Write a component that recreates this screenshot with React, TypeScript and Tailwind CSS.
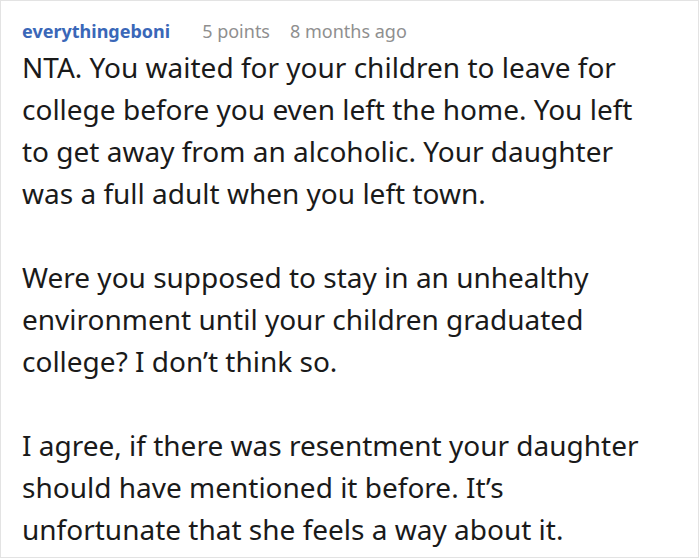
export default function App() {
  return (
    <div className="w-[699px] h-[558px] border border-[#e3e3e3] bg-white font-['Noto_Sans',sans-serif] overflow-hidden">
      <div className="pl-[21px] pt-[17px]">
        <div className="flex items-baseline text-[18px] leading-[26px]">
          <span className="font-bold text-[#3a67b8]">everythingeboni</span>
          <span className="ml-[32px] text-[#8f8f8f]">5 points</span>
          <span className="ml-[20px] text-[#8f8f8f]">8 months ago</span>
        </div>
        <div className="mt-[2px] text-[28px] leading-[42px] text-[#1a1a1a] whitespace-nowrap">
          <p>
            NTA. You waited for your children to leave for
            <br />
            college before you even left the home. You left
            <br />
            to get away from an alcoholic. Your daughter
            <br />
            was a full adult when you left town.
          </p>
          <p className="mt-[42px]">
            Were you supposed to stay in an unhealthy
            <br />
            environment until your children graduated
            <br />
            college? I don’t think so.
          </p>
          <p className="mt-[42px]">
            I agree, if there was resentment your daughter
            <br />
            should have mentioned it before. It’s
            <br />
            unfortunate that she feels a way about it.
          </p>
        </div>
      </div>
    </div>
  );
}
